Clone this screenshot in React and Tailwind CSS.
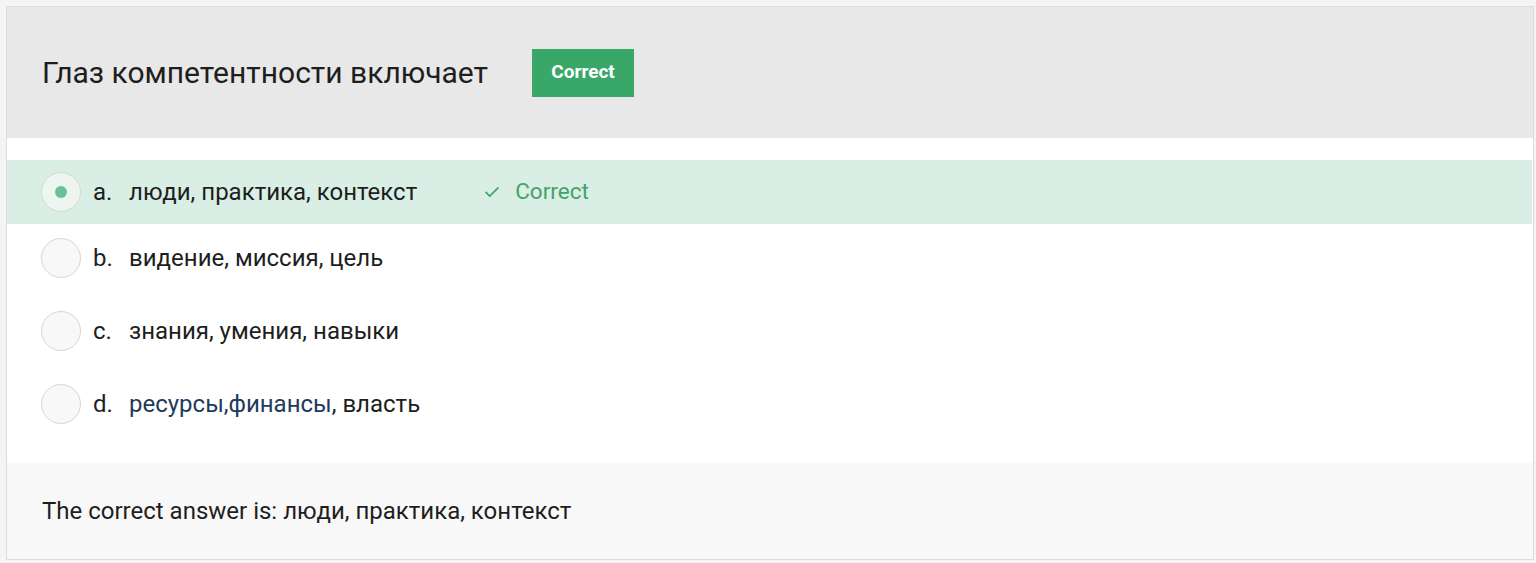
import React from "react";

function Radio({ checked }) {
  return (
    <div
      className={`flex h-[40px] w-[40px] shrink-0 items-center justify-center rounded-full border border-[#d6d6d6] ${
        checked ? "bg-[#ecf5ef]" : "bg-[#f8f8f8]"
      }`}
    >
      {checked && <div className="h-[12px] w-[12px] rounded-full bg-[#6cc095]" />}
    </div>
  );
}

function Row({ letter, children, checked, extra, className }) {
  return (
    <div className={`flex h-[64px] items-center pl-[34px] ${className}`}>
      <Radio checked={checked} />
      <span className="ml-[12px] w-[36px] text-[24px] text-[#1e1e1e]">{letter}.</span>
      <span className="text-[24px] text-[#1e1e1e]">{children}</span>
      {extra}
    </div>
  );
}

export default function App() {
  return (
    <div
      className="min-h-[563px] bg-[#f4f4f4] pb-[3px] pl-[6px] pr-[2px] pt-[6px]"
      style={{ fontFamily: "Roboto, 'Noto Sans', sans-serif" }}
    >
      <div className="flex h-[554px] flex-col border border-[#dcdcdc] bg-white">
        <div className="flex h-[131px] shrink-0 items-center bg-[#e8e8e8] pl-[35px]">
          <h1 className="text-[30px] font-normal text-[#1e1e1e]">Глаз компетентности включает</h1>
          <div className="ml-[44px] flex h-[48px] w-[102px] items-center justify-center bg-[#38a767] text-[19px] font-bold text-white">
            Correct
          </div>
        </div>
        <div className="flex flex-1 flex-col pt-[22px]">
          <Row
            letter="a"
            checked
            className="mr-[1px] bg-[#d9eee4]"
            extra={
              <span className="ml-[66px] flex items-center text-[22.5px] text-[#43a368]">
                <svg width="18" height="18" viewBox="0 0 24 24" fill="none" stroke="#43a368" strokeWidth="2.2" strokeLinecap="round" strokeLinejoin="round" className="mr-[14px]">
                  <path d="M4 12.5l5 5L20 6.5" />
                </svg>
                Correct
              </span>
            }
          >
            люди, практика, контекст
          </Row>
          <Row letter="b" className="mt-[2px]">видение, миссия, цель</Row>
          <Row letter="c" className="mt-[9px]">знания, умения, навыки</Row>
          <Row letter="d" className="mt-[9px]">
            <span className="text-[#1f3a5c]">ресурсы,финансы</span>, власть
          </Row>
        </div>
        <div className="flex h-[96px] shrink-0 items-center bg-[#f8f8f8] pl-[35px]">
          <span className="text-[24px] text-[#1e1e1e]">The correct answer is: люди, практика, контекст</span>
        </div>
      </div>
    </div>
  );
}
